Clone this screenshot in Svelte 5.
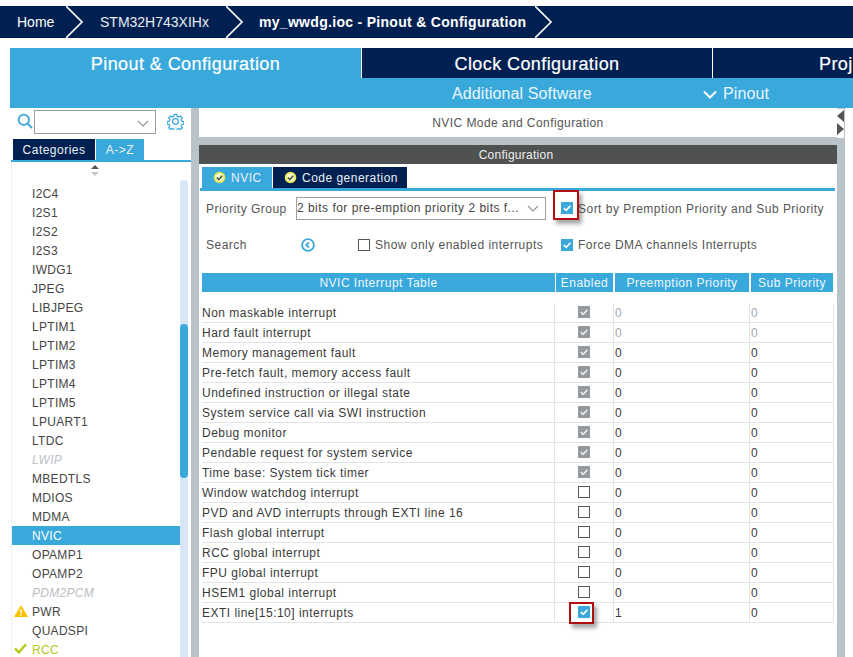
<script>
  const sideItems = [
    ['I2C4'],['I2S1'],['I2S2'],['I2S3'],['IWDG1'],['JPEG'],['LIBJPEG'],['LPTIM1'],['LPTIM2'],['LPTIM3'],['LPTIM4'],['LPTIM5'],['LPUART1'],['LTDC'],
    ['LWIP','off'],['MBEDTLS'],['MDIOS'],['MDMA'],['NVIC','sel'],['OPAMP1'],['OPAMP2'],['PDM2PCM','off'],['PWR','warn'],['QUADSPI'],['RCC','ok']
  ];
  const rows = [
    ['Non maskable interrupt','lock','0','0',true],
    ['Hard fault interrupt','lock','0','0',true],
    ['Memory management fault','lock','0','0'],
    ['Pre-fetch fault, memory access fault','lock','0','0'],
    ['Undefined instruction or illegal state','lock','0','0'],
    ['System service call via SWI instruction','lock','0','0'],
    ['Debug monitor','lock','0','0'],
    ['Pendable request for system service','lock','0','0'],
    ['Time base: System tick timer','lock','0','0'],
    ['Window watchdog interrupt','off','0','0'],
    ['PVD and AVD interrupts through EXTI line 16','off','0','0'],
    ['Flash global interrupt','off','0','0'],
    ['RCC global interrupt','off','0','0'],
    ['FPU global interrupt','off','0','0'],
    ['HSEM1 global interrupt','off','0','0'],
    ['EXTI line[15:10] interrupts','on','1','0','',true]
  ];
</script>

{#snippet box(kind)}
  <span class="box {kind}">
    {#if kind !== 'off'}
      <svg width="12" height="12" viewBox="0 0 12 12"><path d="M2.8 6.2 5.2 8.4 9.4 3.8" fill="none" stroke="#fff" stroke-width="1.7" opacity={kind === 'lock' ? .8 : 1}/></svg>
    {/if}
  </span>
{/snippet}

{#snippet okdot()}
  <svg class="okdot" width="13" height="13" viewBox="0 0 13 13"><circle cx="6.5" cy="6.5" r="5.8" fill="#e3e842"/><circle cx="6.5" cy="6.5" r="4.2" fill="#f4f6d0"/><path d="M3.8 6.5 5.8 8.5 9.2 4.8" fill="none" stroke="#4f5d3a" stroke-width="1.6"/></svg>
{/snippet}

{#snippet caret()}
  <svg class="caret" width="12" height="7" viewBox="0 0 12 7"><path d="M1 1 6 6 11 1" fill="none" stroke="#8d9499" stroke-width="1.1"/></svg>
{/snippet}

<div class="page">
  <nav class="crumbs">
    <span class="crumb home">Home</span>
    <svg class="chev" width="18" height="32" viewBox="0 0 18 32"><path d="M0 0 16 16 0 32" fill="none" stroke="#fff" stroke-width="1.6"/></svg>
    <span class="crumb chip">STM32H743XIHx</span>
    <svg class="chev" width="18" height="32" viewBox="0 0 18 32"><path d="M0 0 16 16 0 32" fill="none" stroke="#fff" stroke-width="1.6"/></svg>
    <span class="crumb file">my_wwdg.ioc - Pinout &amp; Configuration</span>
    <svg class="chev" width="18" height="32" viewBox="0 0 18 32"><path d="M0 0 16 16 0 32" fill="none" stroke="#fff" stroke-width="1.6"/></svg>
  </nav>

  <div class="workspace">
    <div class="maintabs">
      <div class="maintab active">Pinout &amp; Configuration</div>
      <div class="maintab clock">Clock Configuration</div>
      <div class="maintab proj">Proj</div>
    </div>
    <div class="subnav">
      <span class="addl">Additional Software</span>
      <span class="pinout">
        <svg width="14" height="9" viewBox="0 0 14 9"><path d="M1 1.5 7 7.5 13 1.5" fill="none" stroke="#fff" stroke-width="2"/></svg>
        Pinout
      </span>
    </div>

    <div class="columns">
      <aside class="side">
        <div class="searchrow">
          <svg class="mag" width="16" height="16" viewBox="0 0 16 16"><circle cx="6.8" cy="6.8" r="5.2" fill="none" stroke="#39a9dc" stroke-width="1.8"/><path d="M10.6 10.6 15 15" stroke="#39a9dc" stroke-width="2"/></svg>
          <div class="combo small">{@render caret()}</div>
          <svg class="gear" width="17" height="17" viewBox="0 0 24 24"><g fill="none" stroke="#39a9dc" stroke-width="1.8"><circle cx="12" cy="12" r="4"/><path d="M10.2 2h3.6l.5 2.8 2.3 1 2.4-1.6 2.6 2.6-1.6 2.4 1 2.3 2.8.5v3.6l-2.8.5-1 2.3 1.6 2.4-2.6 2.6-2.4-1.6-2.3 1-.5 2.8h-3.6l-.5-2.8-2.3-1-2.4 1.6-2.6-2.6 1.6-2.4-1-2.3-2.8-.5v-3.6l2.8-.5 1-2.3-1.6-2.4 2.6-2.6 2.4 1.6 2.3-1z"/></g></svg>
        </div>
        <div class="sidetabs">
          <span class="sidetab">Categories</span>
          <span class="sidetab sel">A-&gt;Z</span>
        </div>
        <div class="listwrap">
          <div class="sorter">
            <svg width="10" height="11" viewBox="0 0 10 11"><path d="M5 0 9 4H1z" fill="#555"/><path d="M5 11 1 7H9z" fill="#c5c9cc"/></svg>
          </div>
          <div class="listbody">
            <ul class="list">
              {#each sideItems as [name, state]}
                <li class="item {state ?? ''}">
                  {#if state === 'warn'}
                    <svg class="stateicon" width="14" height="12" viewBox="0 0 14 12"><path d="M7 0 14 12H0z" fill="#fdc300"/><path d="M6.3 4h1.4v4.4H6.3zM6.3 9.2h1.4v1.4H6.3z" fill="#fff"/></svg>
                  {:else if state === 'ok'}
                    <svg class="stateicon" width="13" height="11" viewBox="0 0 13 11"><path d="M1 5.5 4.8 9.4 12 1.2" fill="none" stroke="#b6c818" stroke-width="2.4"/></svg>
                  {/if}
                  {name}
                </li>
              {/each}
            </ul>
            <div class="scroll"><div class="thumb"></div></div>
          </div>
        </div>
      </aside>

      <main class="content">
        <div class="modepane">NVIC Mode and Configuration</div>
        <div class="configbar">Configuration</div>
        <div class="ctabs">
          <span class="ctab sel">{@render okdot()}NVIC</span>
          <span class="ctab">{@render okdot()}Code generation</span>
        </div>
        <div class="form">
          <span class="lbl">Priority Group</span>
          <div class="combo wide"><span class="val">2 bits for pre-emption priority 2 bits f...</span>{@render caret()}</div>
          <label class="check first up">
            {@render box('on')}
            <span>Sort by Premption Priority and Sub Priority</span>
            <span class="redbox one"></span>
          </label>
          <span class="lbl">Search</span>
          <div class="searchmid">
            <svg class="back" width="14" height="14" viewBox="0 0 14 14"><circle cx="7" cy="7" r="5.9" fill="none" stroke="#39a9dc" stroke-width="1.8"/><path d="M8 4.4 5.3 7 8 9.6" fill="none" stroke="#39a9dc" stroke-width="1.8"/></svg>
            <label class="check">
              {@render box('off')}
              <span>Show only enabled interrupts</span>
            </label>
          </div>
          <label class="check first">
            {@render box('on')}
            <span>Force DMA channels Interrupts</span>
          </label>
        </div>

        <div class="thead">
          <span class="c1">NVIC Interrupt Table</span>
          <span class="c2">Enabled</span>
          <span class="c3">Preemption Priority</span>
          <span class="c4">Sub Priority</span>
        </div>
        <div class="tbody">
          {#each rows as [name, en, pre, sub, dim, mark]}
            <div class="tr" class:dim>
              <span class="td name">{name}</span>
              <span class="td en">
                {@render box(en)}
                {#if mark}<span class="redbox two"></span>{/if}
              </span>
              <span class="td num">{pre}</span>
              <span class="td num">{sub}</span>
            </div>
          {/each}
        </div>
      </main>

      <div class="rightrail">
        <svg width="7" height="29" viewBox="0 0 7 29"><path d="M7 1V13L0 7z" fill="#555"/><path d="M0 14V26L7 20z" fill="#555"/></svg>
      </div>
    </div>
  </div>
</div>

<style>
  :global(body) { margin: 0; background: #fff; }
  .page {
    width: 853px; height: 657px; overflow: hidden; background: #fff; display: flow-root;
    font-family: "Liberation Sans", Arial, sans-serif; color: #3a3a3a;
    font-size: 12px; letter-spacing: .48px;
  }
  .crumbs {
    margin-top: 6px; height: 32px; background: #002052; color: #fff;
    display: flex; align-items: center; font-size: 14px; letter-spacing: 0;
  }
  .crumb { white-space: nowrap; }
  .home { margin-left: 17px; width: 49px; }
  .chip { margin-left: 16px; width: 126px; color: #e8ecf2; }
  .file { margin-left: 15px; width: 276px; font-weight: 700; letter-spacing: .3px; }
  .chev { flex: none; }
  .workspace { margin: 10px 0 0 10px; }
  .maintabs { display: flex; height: 30px; background: #39a9dc; color: #fff; font-size: 18px; letter-spacing: .42px; -webkit-text-stroke: .2px #fff; }
  .maintab { background: #002052; line-height: 32px; white-space: nowrap; text-align: center; border-left: 1px solid #fff; }
  .maintab.active { background: #39a9dc; width: 351px; border: 0; }
  .clock { width: 350px; }
  .proj { flex: 1; text-align: left; padding-left: 106px; overflow: hidden; }
  .subnav { height: 30px; box-sizing: border-box; padding-top: 2px; background: #39a9dc; color: #eaf6fc; display: flex; align-items: center; font-size: 16px; letter-spacing: .1px; }
  .addl { margin-left: 442px; width: 251px; }
  .pinout { display: flex; align-items: center; gap: 6px; }
  .columns { display: flex; height: 549px; background: linear-gradient(#b8c4ca, #b8c4ca) 181px 0 / 8px 100% no-repeat; }
  .side { width: 181px; flex: none; }
  .searchrow { height: 31px; display: flex; align-items: flex-start; padding-top: 2px; box-sizing: border-box; }
  .mag { margin: 3px 0 0 7px; }
  .combo { position: relative; box-sizing: border-box; border: 1px solid #9aa0a4; background: #fff; }
  .combo.small { width: 122px; height: 24px; margin-left: 1px; }
  .caret { position: absolute; right: 6px; top: 9px; }
  .gear { margin: 3px 0 0 11px; }
  .sidetabs { display: flex; height: 21px; padding-left: 3px; gap: 1px; color: #eaf0f6; }
  .sidetab { background: #002052; width: 82px; text-align: center; line-height: 22px; }
  .sidetab.sel { background: #39a9dc; width: 48px; }
  .listwrap { border-top: 2px solid #39a9dc; margin-left: 1px; height: 500px; }
  .sorter { height: 22px; display: flex; justify-content: center; align-items: flex-start; padding: 3px 13px 0 0; box-sizing: border-box; }
  .sorter svg { display: block; }
  .listbody { display: flex; border-left: 1px solid #eef0f1; margin-top: -22px; padding-top: 22px; }
  .list { list-style: none; margin: 0; padding: 0; width: 168px; flex: none; }
  .item { height: 19px; line-height: 21px; padding-left: 20px; position: relative; letter-spacing: .3px; color: #444; }
  .item.off { color: #b9c0c6; font-style: italic; }
  .item.sel { background: #39a9dc; color: #fff; }
  .item.ok { color: #b6c818; }
  .stateicon { position: absolute; left: 2px; top: 3px; }
  .scroll { width: 8px; height: 480px; margin-top: -4px; background: #d6e6f4; border-radius: 4px 4px 0 0; }
  .thumb { position: relative; top: 144px; height: 154px; background: #39a9dc; border-radius: 4px; }
  .content { margin-left: 8px; width: 638px; flex: none; position: relative; background: #fff; }
  .modepane { height: 29px; line-height: 31px; text-align: center; background: #fff; color: #555; letter-spacing: .42px; border-bottom: 8px solid #b8c4ca; }
  .configbar { height: 19px; line-height: 21px; background: #505251; color: #eee; text-align: center; letter-spacing: .25px; padding-right: 4px; }
  .ctabs { display: flex; gap: 1px; padding: 3px 0 0 3px; height: 21px; }
  .ctab { background: #002052; color: #eaf0f6; display: flex; align-items: center; width: 134px; box-sizing: border-box; padding-left: 11px; gap: 5px; }
  .ctab.sel { background: #39a9dc; width: 70px; }
  .okdot { flex: none; }
  .form {
    border-top: 3px solid #39a9dc; margin-left: 1px; margin-right: 2px; padding: 6px 0 0 6px;
    display: grid; grid-template-columns: 90px 250px 1fr; grid-template-rows: 23px 22px; row-gap: 14px; align-items: center;
    color: #555;
  }
  .lbl { white-space: nowrap; }
  .combo.wide { height: 23px; width: 250px; line-height: 21px; white-space: nowrap; }
  .combo.wide .caret { top: 7px; }
  .val { color: #444; }
  .check { display: flex; align-items: center; gap: 5px; position: relative; white-space: nowrap; }
  .check.first { margin-left: 15px; }
  .check.up .box { margin-top: -1px; }
  .searchmid { display: flex; align-items: center; }
  .back { margin-left: 5px; margin-right: 43px; }
  .box { width: 12px; height: 12px; flex: none; display: block; box-sizing: border-box; }
  .box svg { display: block; }
  .box.on { background: #39a9dc; }
  .box.lock { background: #94999e; }
  .box.off { border: 1.4px solid #555; background: #fff; }
  .redbox { position: absolute; border: 2.6px solid #b0100f; box-shadow: 3px 4px 4px rgba(60,60,60,.45); box-sizing: border-box; pointer-events: none; }
  .redbox.one { left: -8px; top: -12px; width: 26px; height: 30px; }
  .redbox.two { left: 14px; top: -1px; width: 25px; height: 22px; }
  .thead {
    display: flex; gap: 1px; margin: 17px 0 0 3px; height: 19px; line-height: 21px; color: #eef7fc; text-align: center;
  }
  .thead span { background: #39a9dc; display: block; }
  .c1 { width: 353px; }
  .c2 { width: 57px; }
  .c3 { width: 134px; margin-left: 1px; }
  .c4 { width: 82px; margin-left: 1px; }
  .tbody { margin: 11px 0 0 3px; width: 632px; }
  .tr { display: grid; grid-template-columns: 353px 59px 136px 84px; height: 20px; }
  .td { box-sizing: border-box; border-bottom: 1px solid #e2e5e7; border-right: 1px solid #e2e5e7; line-height: 21px; height: 20px; overflow: hidden; white-space: nowrap; color: #3a3a3a; }
  .en { position: relative; overflow: visible; display: flex; justify-content: center; align-items: center; padding-right: 1px; padding-bottom: 1px; }
  .num { padding-left: 1px; }
  .tr.dim .num { color: #a4a8ab; }
  .rightrail { width: 8px; flex: none; background: #b8c4ca; }
  .rightrail svg { display: block; margin-top: 1px; background: #fff; height: 29px; }
</style>
